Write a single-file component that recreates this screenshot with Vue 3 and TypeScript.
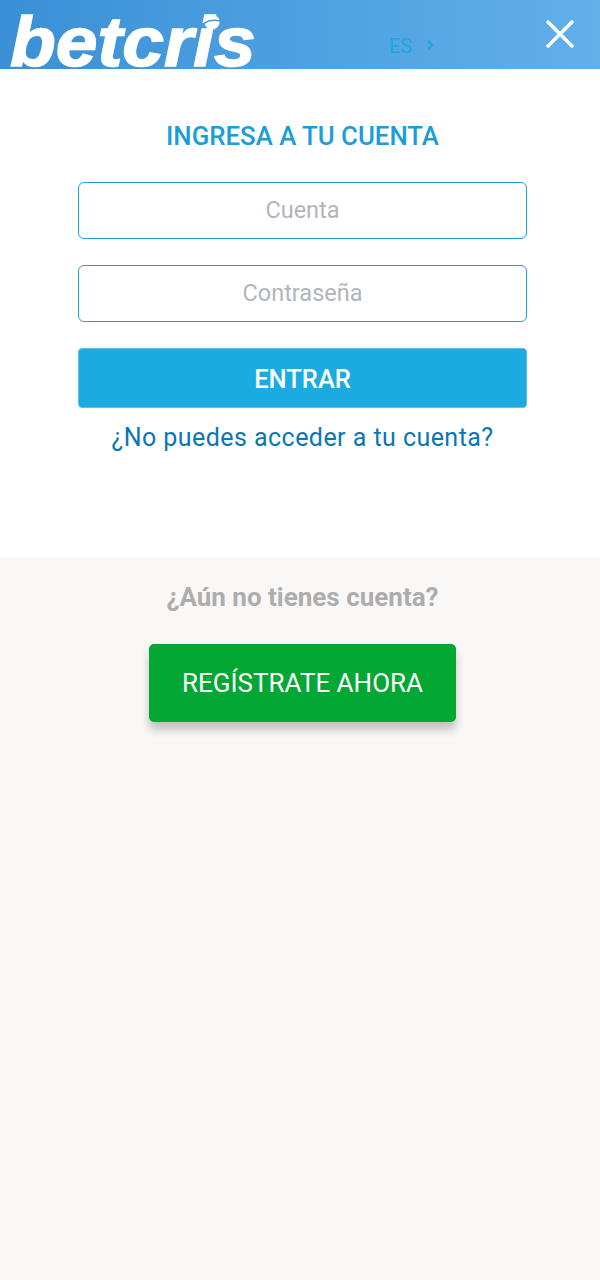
<script setup lang="ts">
import { ref } from "vue";

const account = ref("");
const password = ref("");
</script>

<template>
  <div class="login-page">
    <header class="top-bar">
      <div class="logo">
        <span class="logo-text">betcris</span>
        <svg class="logo-ball" viewBox="0 0 18 18" width="16" height="16">
          <circle cx="9" cy="9" r="8.5" fill="#fff" />
          <path d="M0 10.5 C5 7 12 6.5 18 8" fill="none" stroke="#3f97da" stroke-width="1.6" />
        </svg>
      </div>
      <div class="lang">
        <span>ES</span>
        <svg class="lang-arrow" viewBox="0 0 8 12" width="8" height="12">
          <path d="M2 1.5 L6 6 L2 10.5" fill="none" stroke="#1ba7df" stroke-width="2" />
        </svg>
      </div>
      <button class="close" aria-label="Cerrar">
        <svg viewBox="0 0 28 28" width="28" height="28">
          <path d="M2 2 L26 26 M26 2 L2 26" stroke="#fff" stroke-width="3.4" stroke-linecap="round" />
        </svg>
      </button>
    </header>

    <section class="login-card">
      <h1>INGRESA A TU CUENTA</h1>
      <form class="login-form" @submit.prevent>
        <input v-model="account" type="text" placeholder="Cuenta" />
        <input v-model="password" type="password" placeholder="Contraseña" />
        <button class="submit" type="submit">ENTRAR</button>
      </form>
      <a class="forgot" href="#">¿No puedes acceder a tu cuenta?</a>
    </section>

    <section class="signup">
      <p>¿Aún no tienes cuenta?</p>
      <button class="register">REGÍSTRATE AHORA</button>
    </section>
  </div>
</template>

<style>
body {
  background: #f9f8f6;
}
</style>

<style scoped>
.login-page {
  width: 600px;
  min-height: 1280px;
  background: #f9f8f6;
  font-family: Roboto, "Liberation Sans", sans-serif;
  display: flex;
  flex-direction: column;
}

.top-bar {
  height: 69px;
  flex: none;
  display: flex;
  align-items: flex-start;
  background: linear-gradient(90deg, #3a90d6 0%, #62b0ea 100%);
}

.logo {
  position: relative;
  width: 252px;
  height: 69px;
  margin-left: 10px;
  flex: none;
}

.logo-text {
  display: block;
  margin-top: 3px;
  font-family: "Liberation Sans", sans-serif;
  font-size: 70px;
  line-height: 78px;
  font-weight: 700;
  font-style: italic;
  color: #fff;
  -webkit-text-stroke: 1.5px #fff;
  transform: scaleX(1.07);
  transform-origin: left;
}

.logo-ball {
  position: absolute;
  left: 194px;
  top: 14px;
  display: block;
}

.lang {
  margin: 35px 0 0 127px;
  display: flex;
  align-items: center;
  gap: 14px;
  font-size: 20px;
  line-height: 23px;
  color: #1ba7df;
}

.lang-arrow {
  margin-top: -3px;
}

.close {
  margin: 20px 26px 0 auto;
  padding: 0;
  width: 28px;
  height: 28px;
  border: 0;
  background: none;
}

.close svg {
  display: block;
}

.login-card {
  height: 488px;
  flex: none;
  padding: 53px 73px 0 78px;
  box-sizing: border-box;
  background: #fff;
  display: flex;
  flex-direction: column;
  align-items: center;
}

h1 {
  margin: 0 0 32px;
  font-size: 25.8px;
  line-height: 28px;
  font-weight: 500;
  white-space: nowrap;
  color: #1a9dd9;
}

.login-form {
  width: 449px;
  display: flex;
  flex-direction: column;
}

input {
  height: 57px;
  margin-bottom: 26px;
  padding: 0 12px 2px;
  box-sizing: border-box;
  border: 1.5px solid #1ba3d6;
  border-radius: 6px;
  background: #fff;
  font-family: inherit;
  font-size: 23.5px;
  text-align: center;
  outline: none;
}

input::placeholder {
  color: #b1b5bd;
  opacity: 1;
}

.submit {
  height: 60px;
  padding: 2px 0 0;
  border: 1px solid #5cc1ea;
  border-radius: 4px;
  background: #1cabe1;
  color: #fff;
  font-family: inherit;
  font-size: 25.5px;
  font-weight: 500;
}

.forgot {
  margin-top: 14px;
  font-size: 25px;
  line-height: 32px;
  letter-spacing: 0.45px;
  color: #0a76b4;
  text-decoration: none;
}

.signup {
  display: flex;
  flex-direction: column;
  align-items: center;
  padding-left: 5px;
}

.signup p {
  margin: 25px 0 32px;
  font-size: 26px;
  line-height: 30px;
  font-weight: 700;
  color: #aeadad;
}

.register {
  width: 307px;
  height: 78px;
  padding: 0;
  border: 0;
  border-radius: 5px;
  background: #02a734;
  color: #fff;
  font-family: inherit;
  font-size: 26px;
  font-weight: 400;
  box-shadow: 0 8px 10px rgba(0, 0, 0, 0.22);
}
</style>
